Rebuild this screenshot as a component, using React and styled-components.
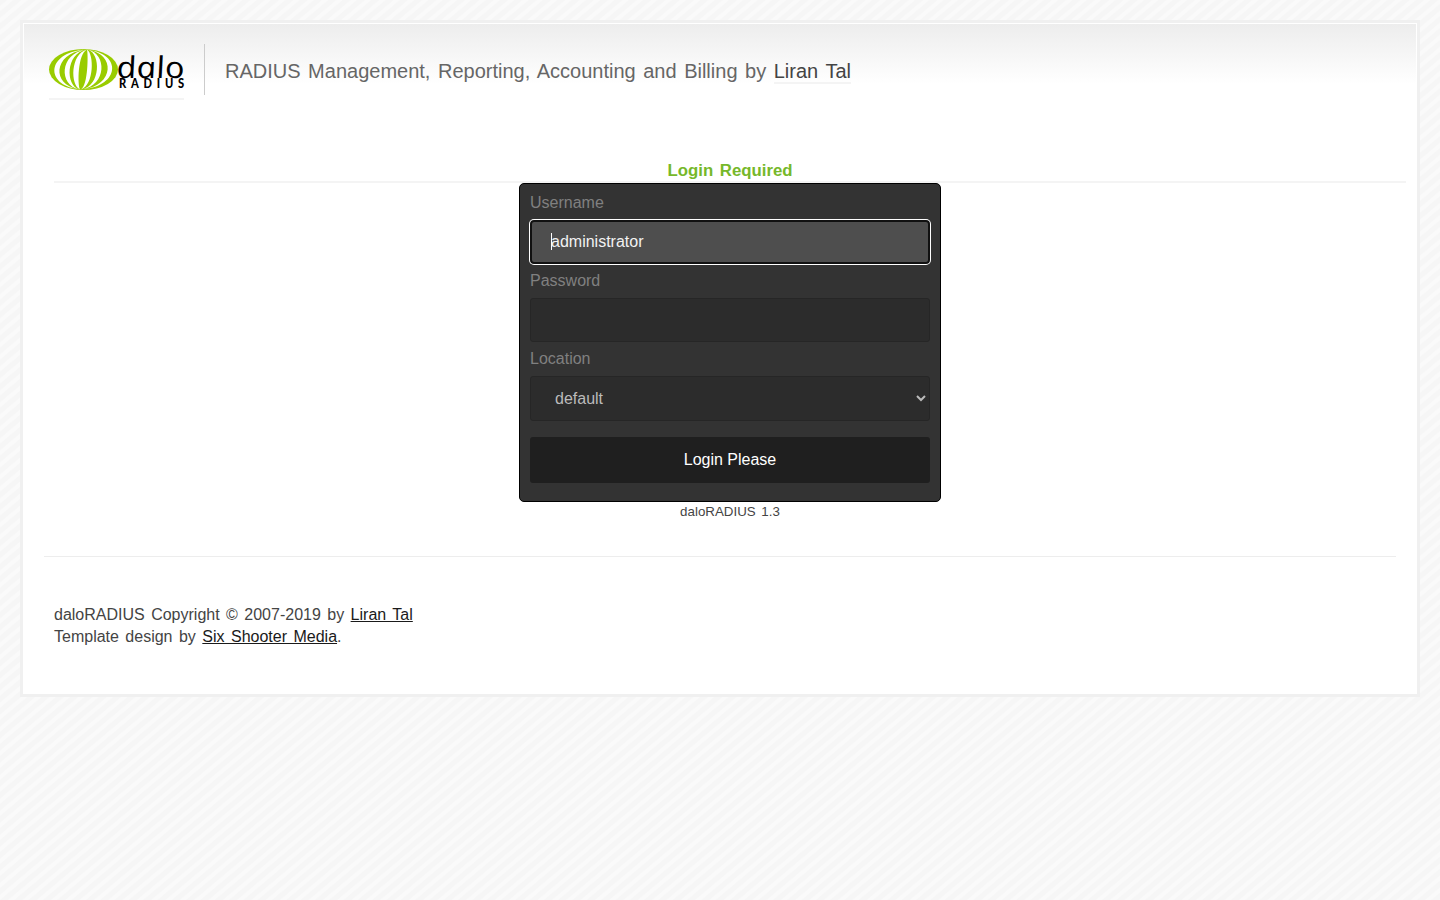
import React from "react";
import styled, { createGlobalStyle } from "styled-components";

const GlobalStyle = createGlobalStyle`
  body {
    margin: 0;
    min-height: 100vh;
    background: repeating-linear-gradient(140deg, #f6f6f6 0, #f6f6f6 4px, #fafafa 5.2px, #fafafa 8px, #f6f6f6 9.2px);
    font: 16px/22px "Liberation Sans", Arial, sans-serif;
    color: #444;
    word-spacing: 2px;
  }
`;

const Page = styled.div`
  padding: 20px;
`;

const Frame = styled.div`
  box-sizing: border-box;
  height: 677px;
  padding: 1px;
  border: 3px solid #f0f0f0;
  background: #fff;
`;

const Header = styled.header`
  box-sizing: border-box;
  display: flex;
  align-items: flex-start;
  height: 137px;
  padding: 20px 25px 0;
  background: linear-gradient(#ededed, #fff 60px);
`;

const LogoLink = styled.a`
  box-sizing: border-box;
  width: 135px;
  height: 56px;
  border-bottom: 2px solid #f4f4f4;
`;

const LogoSvg = styled.svg`
  display: block;
  overflow: visible;
`;

const Tagline = styled.h2`
  height: 51px;
  margin: 0 0 0 20px;
  padding-left: 20px;
  border-left: 1px solid #ccc;
  font-size: 20px;
  font-weight: normal;
  line-height: 54px;
  color: #666;
`;

const AuthorLink = styled.a`
  border-bottom: 2px solid #f4f4f4;
  color: #444;
`;

const Title = styled.h2`
  height: 20px;
  margin: 0 10px 0 30px;
  border-bottom: 2px solid #f4f4f4;
  color: #76b82a;
  font-size: 16.8px;
  line-height: 20px;
  text-align: center;
`;

const LoginArea = styled.main`
  display: flex;
  flex-direction: column;
  align-items: center;
  margin-left: 20px;
`;

const LoginForm = styled.form`
  box-sizing: border-box;
  width: 422px;
  height: 319px;
  padding: 8px 10px;
  border: 1px solid #000;
  border-radius: 5px;
  background: #333;
`;

const Field = styled.label`
  display: block;
  position: relative;
  height: 78px;
  color: #808080;
  line-height: 22px;
`;

const controlStyle = `
  display: block;
  box-sizing: border-box;
  width: 400px;
  margin: 6px 0 0;
  border-radius: 3px;
  outline: none;
  font: 16px "Liberation Sans", Arial, sans-serif;
`;

const Input = styled.input`
  ${controlStyle}
  height: 44px;
  padding: 0 ${(p) => (p.$active ? 19 : 20)}px;
  border: ${(p) => (p.$active ? "2px solid #111" : "1px solid #262626")};
  background: ${(p) => (p.$active ? "#4e4e4e" : "#2c2c2c")};
  box-shadow: ${(p) => (p.$active ? "0 0 0 1px #fff" : "none")};
  border-radius: ${(p) => (p.$active ? 4 : 3)}px;
  color: #f2f2f2;
`;

const Caret = styled.span`
  position: absolute;
  left: 21px;
  top: 41px;
  width: 1px;
  height: 17px;
  background: #fff;
`;

const Select = styled.select`
  ${controlStyle}
  height: 45px;
  padding: 0 0 0 20px;
  border: 1px solid #262626;
  background: #2c2c2c;
  color: #bbb;
`;

const LoginButton = styled.button`
  display: block;
  width: 400px;
  height: 46px;
  margin: 11px 0 0;
  padding: 0;
  border: 0;
  border-radius: 3px;
  background: #1f1f1f;
  color: #fff;
  font: 16px "Liberation Sans", Arial, sans-serif;
`;

const Version = styled.small`
  font-size: 13.33px;
  line-height: 20px;
`;

const Footer = styled.footer`
  margin: 34px 20px 0;
  padding: 47px 10px 0;
  border-top: 1px solid #ededed;
`;

const FooterLink = styled.a`
  color: #1a1a1a;
  text-decoration: underline;
`;

function Logo() {
  return (
    <LogoSvg width="135" height="54" viewBox="0 0 135 54" aria-label="daloRADIUS">
      <ellipse cx="34.5" cy="25.5" rx="34.5" ry="20.5" fill="#9c0" />
      <g fill="#fff">
        <path d="M36 5.5C-3.5 9 -3.5 41 29 45C3.2 41 3.2 10 36 5.5Z" />
        <path d="M37 5.5C9.9 10 9.9 41 30 45.5C16.5 41 16.5 10 37 5.5Z" />
        <path d="M38 5.5C21.2 10 21.2 41 31 45.5C28.5 41 28.5 10 38 5.5Z" />
        <path d="M38 5.5C45.2 10 45.2 41 32 45.5C39.2 41 39.2 10 38 5.5Z" />
        <path d="M39 5.5C57.9 10 57.9 41 33 45.5C51.9 41 51.9 10 39 5.5Z" />
        <path d="M40 6C71.9 10 71.9 41 34 45.5C65.9 41 65.9 10 40 6Z" />
      </g>
      <text
        transform="translate(69 34) skewX(11)"
        textLength="68"
        lengthAdjust="spacingAndGlyphs"
        fontFamily="Open Sans, Noto Sans, sans-serif"
        fontStyle="italic"
        fontSize="30"
      >
        dalo
      </text>
      <text
        transform="translate(70 44) scale(0.9 1)"
        textLength="72.5"
        fontFamily="Lato, sans-serif"
        fontSize="12.4"
        fontWeight="900"
      >
        RADIUS
      </text>
    </LogoSvg>
  );
}

export default function App() {
  return (
    <Page>
      <GlobalStyle />
      <Frame>
        <Header>
          <LogoLink>
            <Logo />
          </LogoLink>
          <Tagline>
            RADIUS Management, Reporting, Accounting and Billing by <AuthorLink>Liran Tal</AuthorLink>
          </Tagline>
        </Header>
        <Title>Login Required</Title>
        <LoginArea>
          <LoginForm>
            <Field>
              Username
              <Input $active defaultValue="administrator" />
              <Caret />
            </Field>
            <Field>
              Password
              <Input type="password" />
            </Field>
            <Field>
              Location
              <Select>
                <option>default</option>
              </Select>
            </Field>
            <LoginButton type="button">Login Please</LoginButton>
          </LoginForm>
          <Version>daloRADIUS 1.3</Version>
        </LoginArea>
        <Footer>
          daloRADIUS Copyright © 2007-2019 by <FooterLink>Liran Tal</FooterLink>
          <br />
          Template design by <FooterLink>Six Shooter Media</FooterLink>.
        </Footer>
      </Frame>
    </Page>
  );
}
